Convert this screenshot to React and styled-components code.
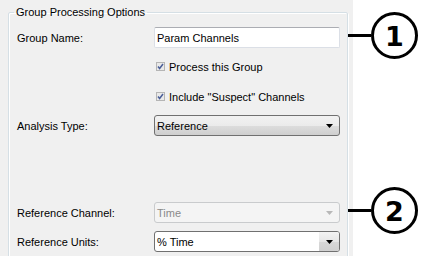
import React from 'react';
import styled, { createGlobalStyle } from 'styled-components';

const GlobalStyle = createGlobalStyle`
    html, body {
        margin: 0;
        padding: 0;
        background: #fff;
    }
    * {
        box-sizing: border-box;
    }
`;

const Screen = styled.div`
    position: relative;
    display: flex;
    width: 423px;
    height: 256px;
    overflow: hidden;
    background: #fff;
    font-family: 'Liberation Sans', Arial, sans-serif;
    font-size: 11px;
    color: #000;
`;

const DialogPane = styled.div`
    width: 353px;
    height: 100%;
    background: #f0f0f0;
    padding-left: 8px;
`;

const GroupBox = styled.fieldset`
    width: 340px;
    height: 300px;
    margin: 4px 0 0 0;
    padding: 7px 6px 0 8px;
    border: 1px solid #d5dfe5;
    box-shadow: inset 1px 1px 0 #fff, 1px 1px 0 #fff;
    border-radius: 2px;
`;

const Legend = styled.legend`
    margin-left: -3px;
    padding: 0 2px;
    line-height: 16px;
    font-size: 11px;
`;

const Rows = styled.div`
    display: flex;
    flex-direction: column;
`;

const Row = styled.div`
    display: grid;
    grid-template-columns: 137px 186px;
    align-items: center;
    height: 21px;
    margin-top: ${p => p.$space || 0}px;
`;

const Label = styled.span`
    white-space: nowrap;
`;

const TextBox = styled.div`
    height: 21px;
    background: #fff;
    border: 1px solid #dbdfe6;
    border-top-color: #abadb3;
    border-radius: 2px;
    padding-left: 2px;
    display: flex;
    align-items: center;
`;

const CheckLine = styled.label`
    grid-column: 2;
    display: flex;
    align-items: center;
    gap: 4px;
    padding-left: 2px;
`;

const Combo = styled.div`
    height: 21px;
    display: flex;
    align-items: center;
    justify-content: space-between;
    border: 1px solid ${p => (p.$disabled ? '#c9cbcd' : '#707070')};
    border-radius: 3px;
    padding-left: 2px;
    color: ${p => (p.$disabled ? '#8a8a8a' : '#000')};
    background: ${p =>
        p.$disabled
            ? '#f4f4f4'
            : p.$editable
            ? '#fff'
            : 'linear-gradient(to bottom, #f2f2f2 0%, #ebebeb 50%, #dddddd 51%, #cfcfcf 100%)'};
    overflow: hidden;
`;

const ArrowButton = styled.div`
    width: 20px;
    height: 100%;
    display: flex;
    align-items: center;
    justify-content: center;
    background: ${p =>
        p.$raised ? 'linear-gradient(to bottom, #f3f3f3 0%, #e6e6e6 50%, #d8d8d8 51%, #d0d0d0 100%)' : 'transparent'};
`;

const Callout = styled.div`
    position: absolute;
    left: 348px;
    top: ${p => p.$top}px;
    display: flex;
    align-items: center;
`;

const Leader = styled.div`
    width: 23px;
    height: 3px;
    background: #000;
`;

const Bubble = styled.div`
    width: 47px;
    height: 47px;
    border: 3px solid #000;
    border-radius: 50%;
    background: #fff;
    display: flex;
    align-items: center;
    justify-content: center;
    font-family: 'DejaVu Sans', sans-serif;
    font-weight: bold;
    font-size: 27px;
    line-height: 1;
    padding-top: 1px;
`;

const CheckBox = () => (
    <svg width="9" height="9" viewBox="0 0 9 9">
        <rect x="0.5" y="0.5" width="8" height="8" fill="#e9e9e9" stroke="#b5b5b5" />
        <path d="M2 4.5 L3.6 6.5 L7 2" fill="none" stroke="#4a5e98" strokeWidth="1.5" />
    </svg>
);

const Arrow = ({ color }) => (
    <svg width="7" height="4" viewBox="0 0 7 4">
        <path d="M0 0 H7 L3.5 4 Z" fill={color} />
    </svg>
);

export default function App() {
    return (
        <>
            <GlobalStyle />
            <Screen>
                <DialogPane>
                    <GroupBox>
                        <Legend>Group Processing Options</Legend>
                        <Rows>
                            <Row>
                                <Label>Group Name:</Label>
                                <TextBox>Param Channels</TextBox>
                            </Row>
                            <Row $space={8}>
                                <CheckLine>
                                    <CheckBox />
                                    Process this Group
                                </CheckLine>
                            </Row>
                            <Row $space={9}>
                                <CheckLine>
                                    <CheckBox />
                                    Include "Suspect" Channels
                                </CheckLine>
                            </Row>
                            <Row $space={8}>
                                <Label>Analysis Type:</Label>
                                <Combo>
                                    Reference
                                    <ArrowButton>
                                        <Arrow color="#000" />
                                    </ArrowButton>
                                </Combo>
                            </Row>
                            <Row $space={66}>
                                <Label>Reference Channel:</Label>
                                <Combo $disabled>
                                    Time
                                    <ArrowButton>
                                        <Arrow color="#b8b8b8" />
                                    </ArrowButton>
                                </Combo>
                            </Row>
                            <Row $space={8}>
                                <Label>Reference Units:</Label>
                                <Combo $editable>
                                    % Time
                                    <ArrowButton $raised>
                                        <Arrow color="#000" />
                                    </ArrowButton>
                                </Combo>
                            </Row>
                        </Rows>
                    </GroupBox>
                </DialogPane>
                <Callout $top={12}>
                    <Leader />
                    <Bubble>1</Bubble>
                </Callout>
                <Callout $top={187}>
                    <Leader />
                    <Bubble>2</Bubble>
                </Callout>
            </Screen>
        </>
    );
}
